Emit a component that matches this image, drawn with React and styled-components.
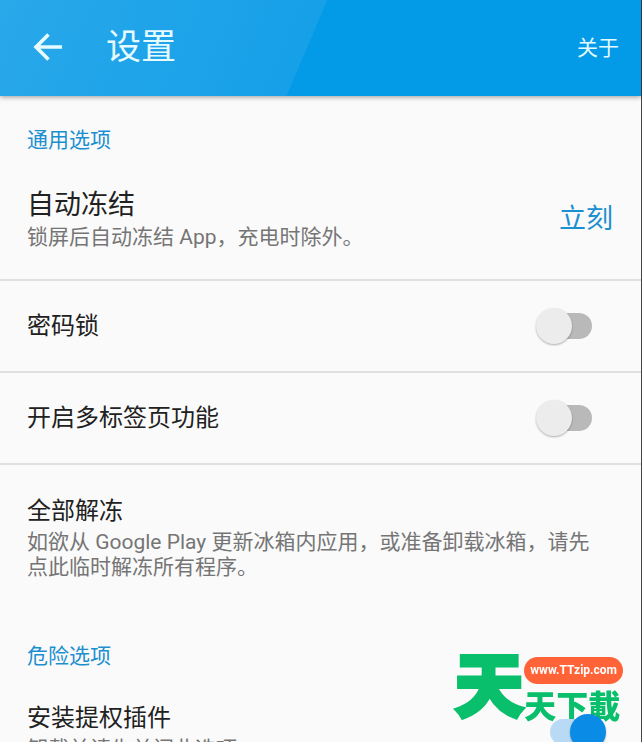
import React, { useState } from "react";
import styled, { createGlobalStyle } from "styled-components";

function App() {
  const [lock, setLock] = useState(false);
  const [tabs, setTabs] = useState(false);
  const [plugin, setPlugin] = useState(true);

  return (
    <>
      <GlobalStyle />
      <Screen>
        <Header>
          <BackButton type="button" aria-label="返回">
            <svg width="30" height="30" viewBox="0 0 30 30" fill="none" stroke="currentColor" strokeWidth="3.6">
              <path d="M15.5 1.5 L3 14 L15.5 26.5 M3 14 H29" />
            </svg>
          </BackButton>
          <Title>设置</Title>
          <About href="#">关于</About>
        </Header>

        <Section>
          <SectionTitle>通用选项</SectionTitle>
          <Row $tall>
            <Text>
              <Name $large>自动冻结</Name>
              <Note>锁屏后自动冻结 App，充电时除外。</Note>
            </Text>
            <Value type="button">立刻</Value>
          </Row>
          <SwitchRow>
            <Name as="label" htmlFor="lock">密码锁</Name>
            <Switch id="lock" checked={lock} onChange={() => setLock(!lock)} />
          </SwitchRow>
          <SwitchRow>
            <Name as="label" htmlFor="tabs">开启多标签页功能</Name>
            <Switch id="tabs" checked={tabs} onChange={() => setTabs(!tabs)} />
          </SwitchRow>
          <Row>
            <Text>
              <Name>全部解冻</Name>
              <Note>如欲从 Google Play 更新冰箱内应用，或准备卸载冰箱，请先点此临时解冻所有程序。</Note>
            </Text>
          </Row>
        </Section>

        <Section>
          <SectionTitle>危险选项</SectionTitle>
          <Row>
            <Text>
              <Name as="label" htmlFor="plugin">安装提权插件</Name>
              <Note>卸载前请先关闭此选项</Note>
            </Text>
            <Switch $edge id="plugin" checked={plugin} onChange={() => setPlugin(!plugin)} />
          </Row>
        </Section>

        <Watermark>
          <BigChar>天</BigChar>
          <Side>
            <Pill>www.TTzip.com</Pill>
            <SmallChars>天下載</SmallChars>
          </Side>
        </Watermark>
      </Screen>
    </>
  );
}

export default App;

const GlobalStyle = createGlobalStyle`
  * {
    box-sizing: border-box;
  }
  html {
    scrollbar-width: none;
  }
  body {
    margin: 0;
    background: #fafafa;
    font-family: Roboto, "Noto Sans CJK SC", sans-serif;
    color: #212121;
  }
  h1, h2, h3, p {
    margin: 0;
    font-weight: 400;
  }
  button {
    padding: 0;
    border: 0;
    background: none;
    font: inherit;
    cursor: pointer;
  }
`

const Screen = styled.main`
  min-height: 100vh;
  border-right: 1px solid #444;
`

const Header = styled.header`
  display: flex;
  align-items: center;
  height: 96px;
  padding: 0 22px 0 33px;
  color: #e6fbff;
  background:
    linear-gradient(113deg, #29a8ea 0%, #16a0e8 48%, #039be8 48%);
  box-shadow: 0 1px 5px rgba(0, 0, 0, 0.4);
`

const BackButton = styled.button`
  display: flex;
  color: inherit;
`

const Title = styled.h1`
  flex: 1;
  margin-left: 43px;
  font-size: 35px;
  line-height: 48px;
`

const About = styled.a`
  color: inherit;
  font-size: 21px;
  line-height: 24px;
  text-decoration: none;
`

const Section = styled.section`
  display: flex;
  flex-direction: column;
`

const SectionTitle = styled.h2`
  padding: 28px 28px 0 27px;
  font-size: 21px;
  line-height: 32px;
  color: #1b8fd0;
`

const Row = styled.div`
  display: flex;
  align-items: center;
  justify-content: space-between;
  padding: ${props => props.$tall ? "32px 28px 29px 27px" : "30px 28px 32px 27px"};
  border-bottom: ${props => props.$tall ? "2px solid #e0e0e0" : "0"};
`

const SwitchRow = styled(Row)`
  height: 92px;
  padding: 0 28px 0 27px;
  border-bottom: 2px solid #e0e0e0;
`

const Text = styled.div`
  display: flex;
  flex-direction: column;
  padding-right: 10px;
`

const Name = styled.h3`
  font-size: ${props => props.$large ? "27px" : "24px"};
  line-height: ${props => props.$large ? "34px" : "32px"};
`

const Note = styled.p`
  margin-top: 3px;
  font-size: 21px;
  line-height: 25px;
  color: #757575;
`

const Value = styled.button`
  && {
    font-size: 27px;
    line-height: 32px;
  }
  color: #1b8fd0;
`

const Switch = styled.input.attrs({ type: "checkbox", role: "switch" })`
  appearance: none;
  position: relative;
  z-index: 1;
  display: flex;
  align-items: center;
  flex: none;
  width: 50px;
  height: 26px;
  margin: 0 ${props => props.$edge ? "13px" : "21px"} 0 0;
  border-radius: 13px;
  background: #b9b9b9;
  cursor: pointer;

  &::before {
    content: "";
    flex: none;
    width: 36px;
    height: 36px;
    margin-left: -6px;
    border-radius: 50%;
    background: #ececec;
    box-shadow: 0 1px 2px rgba(0, 0, 0, 0.3);
  }

  &:checked {
    background: #b9daf5;
  }
  &:checked::before {
    margin-left: 20px;
    background: #0a8ce6;
  }
`

const Watermark = styled.div`
  position: fixed;
  right: 19px;
  bottom: 18px;
  display: flex;
  align-items: flex-end;
  color: #0abf6b;
  font-family: "Noto Sans CJK TC", sans-serif;
  font-weight: 900;
  pointer-events: none;
`

const BigChar = styled.span`
  margin-bottom: 6px;
  font-size: 70px;
  line-height: 72px;
  -webkit-text-stroke: 3px #0abf6b;
`

const Side = styled.div`
  display: flex;
  flex-direction: column;
`

const Pill = styled.span`
  padding: 0 6px;
  border-radius: 14px;
  background: #ff6337;
  color: #fff;
  font-family: Roboto, sans-serif;
  font-size: 12px;
  font-weight: 700;
  line-height: 27px;
  text-align: center;
`

const SmallChars = styled.span`
  font-size: 32px;
  line-height: 40px;
`
